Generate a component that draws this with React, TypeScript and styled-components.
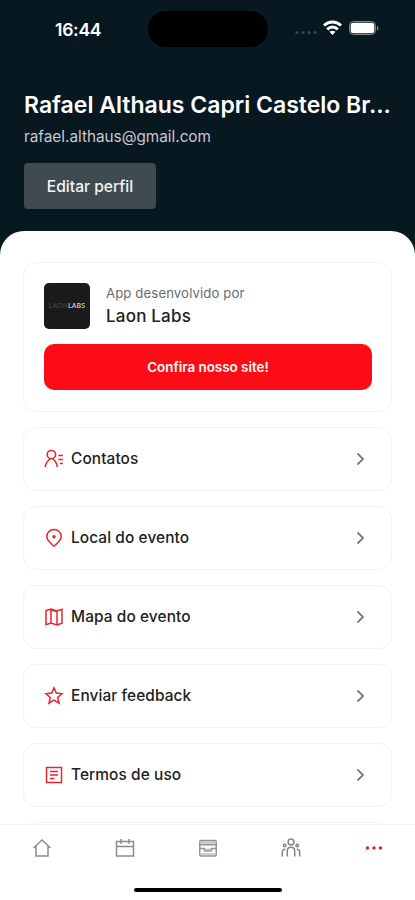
import React from 'react';
import styled, { createGlobalStyle } from 'styled-components';

const GlobalStyle = createGlobalStyle`
  * { box-sizing: border-box; }
  body { margin: 0; background: #fff; font-family: Inter, "Liberation Sans", sans-serif; }
  button { font-family: inherit; border: 0; padding: 0; }
  svg { display: block; flex: none; }
`;

const Screen = styled.div`
  width: 415px;
  height: 900px;
  display: flex;
  flex-direction: column;
  overflow: hidden;
  background: #071820;
`;

const StatusBar = styled.div`
  height: 58px;
  flex: none;
  display: grid;
  grid-template-columns: 148px 120px 1fr;
  align-items: center;
  color: #fff;
`;

const Clock = styled.span`
  padding-left: 55px;
  font-size: 17.6px;
  font-weight: 600;
  letter-spacing: -0.3px;
`;

const Island = styled.div`
  height: 36px;
  border-radius: 18px;
  background: #000;
`;

const StatusIcons = styled.div`
  display: flex;
  align-items: center;
  padding-left: 26px;
  padding-bottom: 2px;
`;

const Header = styled.header`
  height: 173px;
  flex: none;
  padding: 32px 24px 0;
`;

const Name = styled.h1`
  margin: 0;
  color: #fff;
  font-size: 23px;
  line-height: 30px;
  font-weight: 600;
  white-space: nowrap;
`;

const Email = styled.p`
  margin: 5px 0 0;
  color: #cdc6d3;
  font-size: 15.3px;
  line-height: 24px;
`;

const EditButton = styled.button`
  display: block;
  margin-top: 14px;
  width: 132px;
  height: 46px;
  border-radius: 4px;
  background: #3f4b50;
  color: #f2f5f6;
  font-size: 15.6px;
  font-weight: 500;
`;

const Sheet = styled.main`
  flex: 1;
  min-height: 0;
  overflow: hidden;
  border-radius: 24px 24px 0 0;
  background: #fff;
  padding: 31px 23px 0;
  display: flex;
  flex-direction: column;
  gap: 15px;
`;

const Card = styled.section`
  flex: none;
  border: 1.5px solid #f2f2f3;
  border-radius: 13px;
  height: 150px;
  padding: 19px 19px 19px 20px;
`;

const Developer = styled.div`
  display: flex;
  align-items: center;
  gap: 16px;
  height: 47px;
`;

const Logo = styled.div`
  width: 46px;
  height: 46px;
  border-radius: 5px;
  background: #1a1b1c;
  display: flex;
  align-items: center;
  justify-content: center;
  font: 7px "Open Sans", sans-serif;
  color: #505152;
  letter-spacing: 0.1px;
`;

const LogoStrong = styled.span`
  color: #c8c8c8;
  font-weight: 600;
`;

const DevCaption = styled.div`
  color: #6c6c6e;
  font-size: 13.2px;
  line-height: 20px;
  letter-spacing: 0.1px;
`;

const DevName = styled.div`
  color: #202124;
  font-size: 17px;
  line-height: 26px;
  font-weight: 500;
  letter-spacing: 0.2px;
`;

const SiteButton = styled.button`
  display: block;
  width: 100%;
  height: 46px;
  margin-top: 15px;
  border-radius: 10px;
  background: #fc0d16;
  color: #fff;
  font-size: 13.4px;
  font-weight: 600;
`;

const MenuList = styled.nav`
  display: flex;
  flex-direction: column;
  flex: none;
  gap: 15px;
`;

const MenuRow = styled.a`
  display: flex;
  align-items: center;
  height: 64px;
  flex: none;
  padding: 0 21px 1px 20px;
  border: 1.5px solid #f2f2f3;
  border-radius: 13px;
  color: #202124;
`;

const MenuLabel = styled.span`
  flex: 1;
  margin-left: 7px;
  font-size: 15.4px;
  font-weight: 500;
  letter-spacing: 0.1px;
`;

const TabBar = styled.footer`
  height: 76px;
  flex: none;
  background: #fff;
  border-top: 1.5px solid #f4f4f5;
  display: flex;
  flex-direction: column;
  align-items: center;
`;

const Tabs = styled.div`
  width: 100%;
  height: 45px;
  display: grid;
  grid-template-columns: repeat(5, 83px);
  place-items: center;
`;

const HomeIndicator = styled.div`
  width: 148px;
  height: 4px;
  margin-top: 18px;
  border-radius: 2px;
  background: #000;
`;

type IconProps = { size?: number; color?: string; weight?: number; children: React.ReactNode };

const Icon = ({ size = 20, color = '#e5262d', weight = 1.5, children }: IconProps) => (
  <svg width={size} height={size} viewBox="0 0 20 20" fill="none" stroke={color} strokeWidth={weight}>
    {children}
  </svg>
);

const items = [
  {
    label: 'Contatos',
    art: (
      <>
        <circle cx="7.4" cy="5.6" r="4.2" />
        <path d="M1.3 18c.3-3.8 2.2-6.2 4.8-8.200M8.700 9.800c2.600 2 4.300 4.400 4.600 8.200M14.300 6.500H19M14.300 10.500H19M15.800 14.500H19" />
      </>
    ),
  },
  {
    label: 'Local do evento',
    art: (
      <>
        <path d="M10 18.2c-3-2.5-7.2-5.5-7.2-9.6a7.2 7.2 0 0 1 14.4 0c0 4.1-4.2 7.1-7.2 9.6Z" />
        <circle cx="10" cy="8.8" r="1" fill="#e5262d" />
      </>
    ),
  },
  {
    label: 'Mapa do evento',
    art: <path d="M2 3.800 7 2l6 2 5-1.800v14L13 18l-6-2-5 1.800ZM7 2v14M13 4v14M7 2.800l6 2" />,
  },
  {
    label: 'Enviar feedback',
    art: <path d="m10 1.900 2.300 5.200 5.700.6-4.300 3.800 1.300 5.700-5-3-5 3 1.300-5.700L2 7.700l5.700-.6Z" />,
  },
  {
    label: 'Termos de uso',
    art: <path d="M2.500 2.500h15v15h-15ZM6 6.500h8M6 10h8M6 13.500h4.500" />,
  },
];

export default function App() {
  return (
    <>
      <GlobalStyle />
      <Screen>
        <StatusBar>
          <Clock>16:44</Clock>
          <Island />
          <StatusIcons>
            <svg width="88" height="20" viewBox="0 0 88 20">
              <g fill="#3a4850">
                <circle cx="3" cy="14.5" r="1.6" />
                <circle cx="9" cy="14.5" r="1.6" />
                <circle cx="15" cy="14.5" r="1.6" />
                <circle cx="21" cy="14.5" r="1.6" />
              </g>
              <g fill="none" stroke="#fff" strokeWidth="3">
                <path d="M30 7.500c5-4.700 12-4.700 17 0M33.200 11.300c3.200-3 7.400-3 10.600 0" />
              </g>
              <path d="m38.500 17-3-3.200c1.700-1.500 4.300-1.500 6 0Z" fill="#fff" />
              <rect x="55.5" y="3.5" width="26" height="13" rx="4" fill="none" stroke="#7d878c" />
              <rect x="56.7" y="4.7" width="23.6" height="10.6" rx="2.8" fill="#fff" />
              <path d="M83 8c2 .5 2 4 0 4.500Z" fill="#7d878c" />
            </svg>
          </StatusIcons>
        </StatusBar>
        <Header>
          <Name>Rafael Althaus Capri Castelo Br...</Name>
          <Email>rafael.althaus@gmail.com</Email>
          <EditButton>Editar perfil</EditButton>
        </Header>
        <Sheet>
          <Card>
            <Developer>
              <Logo>LAON<LogoStrong>LABS</LogoStrong></Logo>
              <div>
                <DevCaption>App desenvolvido por</DevCaption>
                <DevName>Laon Labs</DevName>
              </div>
            </Developer>
            <SiteButton>Confira nosso site!</SiteButton>
          </Card>
          <MenuList>
            {items.map((item) => (
              <MenuRow key={item.label}>
                <Icon>{item.art}</Icon>
                <MenuLabel>{item.label}</MenuLabel>
                <Icon color="#77797c" weight={1.8}>
                  <path d="m7.500 4.500 5.500 5.500-5.500 5.500" />
                </Icon>
              </MenuRow>
            ))}
            <MenuRow />
          </MenuList>
        </Sheet>
        <TabBar>
          <Tabs>
            <Icon color="#8c8c8c">
              <path d="m1.500 10 8.500-8 8.500 8M4 8v10h12V8" />
            </Icon>
            <Icon color="#8c8c8c">
              <path d="M1.500 3.500h17v14.500h-17ZM1.500 8.500h17M6 1v5M14 1v5" />
            </Icon>
            <Icon color="#929292">
              <rect x="1.75" y="2.5" width="16.5" height="15.5" rx="1.5" />
              <path d="M2.500 4.500h15" stroke="#c4c4c4" strokeWidth="2.5" />
              <path d="M2 6.700h16M2 10.500h4.500V13h7" />
              <path d="M7 10.800h7v2.200H7Z" fill="#b4b4b4" stroke="none" />
              <path d="M13.500 13v-2.500H18" />
              <path d="M2.500 16h15" stroke="#cfcfcf" strokeWidth="2" />
            </Icon>
            <Icon color="#858585">
              <circle cx="10" cy="4" r="2.9" />
              <circle cx="3.7" cy="7.5" r="1.3" />
              <circle cx="16.3" cy="7.5" r="1.3" />
              <path d="M6.300 18.500v-5.500c0-4.900 7.400-4.900 7.400 0v5.500M1.300 18.500v-4c0-2 1-3.500 3-3.300M18.700 18.500v-4c0-2-1-3.500-3-3.300" />
            </Icon>
            <Icon color="none">
              <g fill="#dd2020">
                <circle cx="3.5" cy="10" r="1.7" />
                <circle cx="10" cy="10" r="1.7" />
                <circle cx="16.5" cy="10" r="1.7" />
              </g>
            </Icon>
          </Tabs>
          <HomeIndicator />
        </TabBar>
      </Screen>
    </>
  );
}
